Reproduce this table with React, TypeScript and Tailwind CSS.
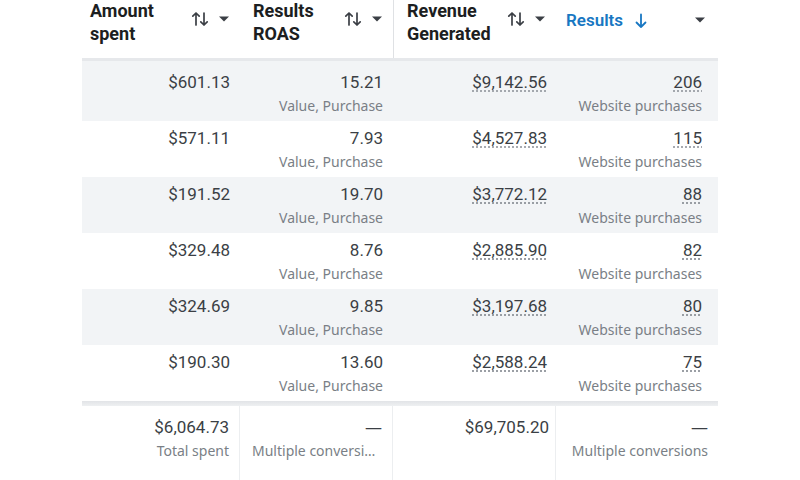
const rows = [
  { spent: "$601.13", roas: "15.21", revenue: "$9,142.56", results: "206" },
  { spent: "$571.11", roas: "7.93", revenue: "$4,527.83", results: "115" },
  { spent: "$191.52", roas: "19.70", revenue: "$3,772.12", results: "88" },
  { spent: "$329.48", roas: "8.76", revenue: "$2,885.90", results: "82" },
  { spent: "$324.69", roas: "9.85", revenue: "$3,197.68", results: "80" },
  { spent: "$190.30", roas: "13.60", revenue: "$2,588.24", results: "75" },
];

const sub = "text-[14px] leading-[22px] text-[#7a7f86] font-['Noto_Sans',sans-serif]";

function SortIcon() {
  return (
    <svg width="18" height="16" viewBox="0 0 18 16" fill="none" stroke="#3b3f45" strokeWidth="1.7" strokeLinecap="round" strokeLinejoin="round">
      <path d="M5 14V2M1.8 5.2 5 2l3.2 3.2" />
      <path d="M13 2v12M9.8 10.8 13 14l3.2-3.2" />
    </svg>
  );
}

function Caret() {
  return (
    <svg width="12" height="8" viewBox="0 0 12 8">
      <path d="M1 1.5h10L6 6.5z" fill="#3b3f45" />
    </svg>
  );
}

function HeaderCell({ lines, pl, border }: { lines: string[]; pl: string; border?: boolean }) {
  return (
    <div className={`flex items-start ${pl} pr-[10px] ${border ? "border-l border-[#dfe1e4]" : ""}`}>
      <div className="font-bold text-[18px] leading-[23px] text-[#1c1e21] -mt-[1px]">
        {lines.map((l) => (
          <div key={l}>{l}</div>
        ))}
      </div>
      <div className="flex items-center ml-auto gap-[9px] mt-[11px]">
        <SortIcon />
        <Caret />
      </div>
    </div>
  );
}

export default function App() {
  return (
    <div className="w-[800px] h-[480px] bg-white overflow-hidden" style={{ fontFamily: "Roboto, 'Noto Sans', sans-serif" }}>
      <div className="ml-[82px] w-[636px]">
        <div className="grid grid-cols-[158px_153px_163px_162px] h-[61px] border-b-[3px] border-[#e6e8eb]">
          <HeaderCell lines={["Amount", "spent"]} pl="pl-[8px]" />
          <HeaderCell lines={["Results", "ROAS"]} pl="pl-[13px]" />
          <HeaderCell lines={["Revenue", "Generated"]} pl="pl-[13px]" border />
          <div className="flex items-start pl-[10px] pr-[12px] pt-[9px]">
            <span className="font-semibold text-[17px] leading-[23px] text-[#1877c2]">Results</span>
            <svg className="ml-[12px] mt-[4px]" width="12" height="16" viewBox="0 0 12 16" fill="none" stroke="#1877c2" strokeWidth="1.8" strokeLinecap="round" strokeLinejoin="round">
              <path d="M6 1.5v12.5M1.5 9.5 6 14l4.5-4.5" />
            </svg>
            <div className="ml-auto mt-[7px]">
              <Caret />
            </div>
          </div>
        </div>

        {rows.map((r, i) => (
          <div
            key={r.spent}
            className={`grid grid-cols-[158px_153px_163px_162px] ${i === 0 ? "h-[60px] pt-[10px]" : "h-[56px] pt-[6px]"} ${i % 2 === 0 ? "bg-[#f2f4f6]" : "bg-white"}`}
          >
            <div className="text-right pr-[10px] text-[17px] leading-[22px] text-[#3b3f45]">{r.spent}</div>
            <div className="text-right pr-[10px]">
              <div className="text-[17px] leading-[22px] text-[#3b3f45]">{r.roas}</div>
              <div className={`${sub} mt-[2px]`}>Value, Purchase</div>
            </div>
            <div className="text-right pr-[9px] text-[17px] leading-[22px] text-[#3b3f45]">
              <span className="underline decoration-dotted decoration-[#8a8f96] underline-offset-[3px]">{r.revenue}</span>
            </div>
            <div className="text-right pr-[16px]">
              <div className="text-[17px] leading-[22px] text-[#3b3f45]">
                <span className="underline decoration-dotted decoration-[#8a8f96] underline-offset-[3px]">{r.results}</span>
              </div>
              <div className={`${sub} mt-[2px]`}>Website purchases</div>
            </div>
          </div>
        ))}

        <div className="h-[5px] bg-gradient-to-b from-[#e2e4e7] to-[#eef0f2]" />

        <div className="grid grid-cols-[158px_153px_163px_162px] h-[74px]">
          <div className="text-right pr-[10px] pt-[10px] border-r border-[#eceef0]">
            <div className="text-[17px] leading-[22px] text-[#3b3f45]">$6,064.73</div>
            <div className={`${sub} mt-[2px]`}>Total spent</div>
          </div>
          <div className="text-right pl-[12px] pr-[10px] pt-[10px] border-r border-[#eceef0] whitespace-nowrap overflow-hidden">
            <div className="text-[17px] leading-[22px] text-[#3b3f45] font-['Noto_Sans',sans-serif]">—</div>
            <div className={`${sub} mt-[2px] truncate text-left`}>Multiple conversions</div>
          </div>
          <div className="text-right pr-[6px] pt-[10px] border-r border-[#eceef0]">
            <div className="text-[17px] leading-[22px] text-[#3b3f45]">$69,705.20</div>
          </div>
          <div className="text-right pr-[10px] pt-[10px]">
            <div className="text-[17px] leading-[22px] text-[#3b3f45] font-['Noto_Sans',sans-serif]">—</div>
            <div className={`${sub} mt-[2px]`}>Multiple conversions</div>
          </div>
        </div>
      </div>
    </div>
  );
}
